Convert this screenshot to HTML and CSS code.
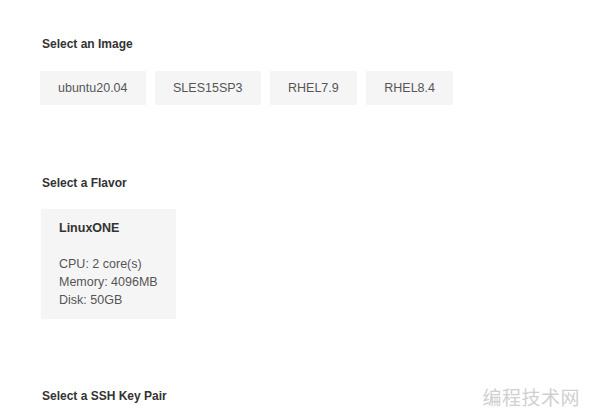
FILE: index.html
```html
<!DOCTYPE html>
<html>
<head>
<meta charset="utf-8">
<link rel="stylesheet" href="styles.css">
</head>
<body>
<div class="page">
  <section class="sec sec-image">
    <h3 class="title">Select an Image</h3>
    <div class="options">
      <div class="opt">ubuntu20.04</div>
      <div class="opt">SLES15SP3</div>
      <div class="opt">RHEL7.9</div>
      <div class="opt">RHEL8.4</div>
    </div>
  </section>
  <section class="sec sec-flavor">
    <h3 class="title">Select a Flavor</h3>
    <div class="card">
      <div class="card-name">LinuxONE</div>
      <div class="card-spec">CPU: 2 core(s)</div>
      <div class="card-spec">Memory: 4096MB</div>
      <div class="card-spec">Disk: 50GB</div>
    </div>
  </section>
  <section class="sec sec-key">
    <h3 class="title">Select a SSH Key Pair</h3>
  </section>
</div>
<div class="watermark">编程技术网</div>
</body>
</html>
```
FILE: styles.css
```css
html, body {
  margin: 0;
  padding: 0;
  background: #fff;
  font-family: "Liberation Sans", Arial, sans-serif;
  color: #333;
  overflow: hidden;
}
.page {
  padding: 37px 0 0 41px;
}
.sec {
  display: flex;
  flex-direction: column;
}
.title {
  margin: 0 0 0 1px;
  font-size: 12px;
  font-weight: bold;
  line-height: 14px;
  color: #333;
}
.options {
  display: flex;
  gap: 9.5px;
  margin-top: 20px;
  margin-left: -1px;
}
.opt {
  background: #f5f5f5;
  color: #555;
  font-size: 12.5px;
  height: 34px;
  line-height: 34px;
  padding: 0 18px;
  box-sizing: border-box;
  text-align: center;
}
.sec-flavor {
  margin-top: 71px;
}
.card {
  align-self: flex-start;
  margin-top: 19px;
  background: #f5f5f5;
  width: 135px;
  box-sizing: border-box;
  padding: 10px 0 10px 18px;
  font-size: 12.5px;
  line-height: 18px;
  color: #555;
}
.card-name {
  font-weight: bold;
  color: #333;
  margin-bottom: 18px;
}
.sec-key {
  margin-top: 70px;
}
.watermark {
  position: absolute;
  right: 9px;
  bottom: 7px;
  font-family: "Noto Sans CJK SC", sans-serif;
  font-size: 19px;
  color: #d0d0d0;
  letter-spacing: 0.5px;
}
```
